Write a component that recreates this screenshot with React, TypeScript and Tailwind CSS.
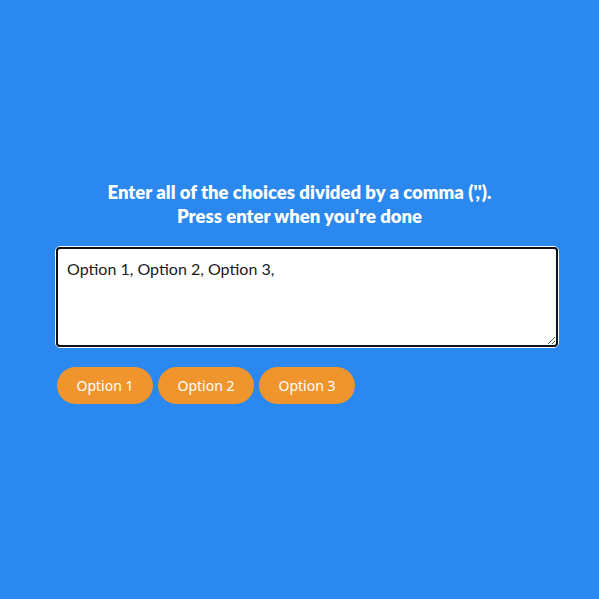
import { useState } from "react";

const choicesFrom = (text: string) =>
	text
		.split(",")
		.map((s) => s.trim())
		.filter((s) => s.length > 0);

export default function App() {
	const [value, setValue] = useState("Option 1, Option 2, Option 3,");
	const choices = choicesFrom(value);

	return (
		<div className="w-full h-[599px] bg-[#2b88ef] pt-[180px] font-['Lato',sans-serif]">
			<h2 className="text-white text-[18.5px] font-extrabold leading-[24px] text-center">
				Enter all of the choices divided by a comma (',').
				<br />
				Press enter when you're done
			</h2>

			<div className="ml-[55px] w-[504px]">
				<div className="mt-[18px] rounded-[5px] border border-white">
					<textarea
						value={value}
						onChange={(e) => setValue(e.target.value)}
						className="block w-full h-[100px] rounded-[4px] border-2 border-[#111] bg-white px-[9px] pt-[10px] text-[16px] leading-[20px] text-[#1a1a1a] outline-none font-['Lato',sans-serif]"
					/>
				</div>

				<div className="flex gap-[5px] mt-[19px] pl-[2px]">
					{choices.map((choice) => (
						<button
							key={choice}
							className="w-[96px] h-[37px] rounded-full bg-[#f0952d] text-white text-[14px] font-['Noto_Sans',sans-serif]"
						>
							{choice}
						</button>
					))}
				</div>
			</div>
		</div>
	);
}
